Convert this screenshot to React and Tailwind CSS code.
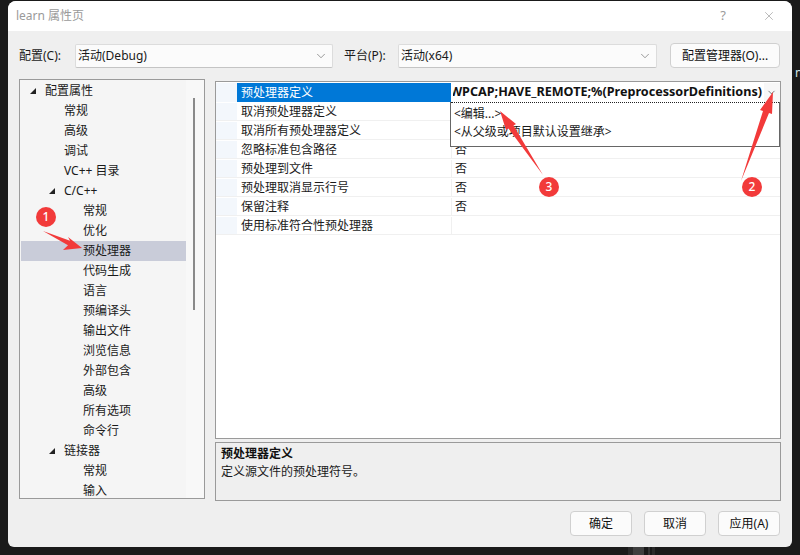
import { X, ChevronDown } from 'lucide-react';

const font = { fontFamily: '"Noto Sans", "Noto Sans CJK SC", sans-serif' };

const treeItems = [
    { label: '配置属性', level: 0, open: true },
    { label: '常规', level: 1 },
    { label: '高级', level: 1 },
    { label: '调试', level: 1 },
    { label: 'VC++ 目录', level: 1 },
    { label: 'C/C++', level: 1, open: true },
    { label: '常规', level: 2 },
    { label: '优化', level: 2 },
    { label: '预处理器', level: 2, selected: true },
    { label: '代码生成', level: 2 },
    { label: '语言', level: 2 },
    { label: '预编译头', level: 2 },
    { label: '输出文件', level: 2 },
    { label: '浏览信息', level: 2 },
    { label: '外部包含', level: 2 },
    { label: '高级', level: 2 },
    { label: '所有选项', level: 2 },
    { label: '命令行', level: 2 },
    { label: '链接器', level: 1, open: true },
    { label: '常规', level: 2 },
    { label: '输入', level: 2 },
];

const levelPadding = ['pl-[24px]', 'pl-[43px]', 'pl-[62px]'];
const caretPosition = ['left-[9px]', 'left-[28px]', 'left-[47px]'];

const gridRows = [
    { name: '取消预处理器定义', value: '' },
    { name: '取消所有预处理器定义', value: '' },
    { name: '忽略标准包含路径', value: '否' },
    { name: '预处理到文件', value: '否' },
    { name: '预处理取消显示行号', value: '否' },
    { name: '保留注释', value: '否' },
    { name: '使用标准符合性预处理器', value: '' },
];

const arrows = [
    '82,248 68,237 70,240.7 43,231 68,245.3 63,250',
    '773,92 772,114 769,113 741,181 763,111 760,110',
    '500,111 516,124 513.5,125.5 543,175 508.5,128.5 506,130',
];

const badges = [
    { n: 1, pos: 'left-[36px] top-[207px]' },
    { n: 2, pos: 'left-[742px] top-[177px]' },
    { n: 3, pos: 'left-[539px] top-[177px]' },
];

const Select = ({ value, width }) => (
    <div className={`${width} h-[24px] flex items-center justify-between pl-[2px] pr-[4px] bg-[#fbfbfb] border border-[#dcdcdc] border-b-[#c4c4c4] rounded-[2px]`}>
        <span>{value}</span>
        <ChevronDown size={14} strokeWidth={1} className="text-[#555]" />
    </div>
);

const Button = ({ children, width = 'w-[62px]' }) => (
    <button className={`${width} h-[25px] flex items-center justify-center bg-[#fbfbfb] border border-[#d0d0d0] rounded-[4px] text-[#111]`}>
        {children}
    </button>
);

const App = () => {
    return (
        <div style={font} className="relative w-[800px] h-[555px] overflow-hidden bg-[#1a1a1a] pt-px pl-[8px] text-[12px] text-[#1a1a1a]">
            <div className="w-[784px] h-[546px] flex flex-col bg-[#efefef] rounded-t-[8px] rounded-b-[6px] overflow-hidden">
                {/* title bar */}
                <div className="h-[30px] shrink-0 bg-white flex items-center justify-between pl-[8px] pr-[16px] text-[#9a9a9a]">
                    <span className="text-[12px]">learn 属性页</span>
                    <div className="flex items-center gap-[36px]">
                        <span className="text-[13px]">?</span>
                        <X size={14} strokeWidth={1} className="text-[#8a8a8a]" />
                    </div>
                </div>

                {/* config row */}
                <div className="flex items-center h-[25px] mt-[12px] pl-[11px]">
                    <span className="w-[56px]">配置(C):</span>
                    <Select value="活动(Debug)" width="w-[258px]" />
                    <span className="ml-[11px] w-[54px]">平台(P):</span>
                    <Select value="活动(x64)" width="w-[259px]" />
                    <Button width="w-[110px] ml-[13px]">配置管理器(O)...</Button>
                </div>

                {/* main panels */}
                <div className="flex gap-[10px] pl-[11px] mt-[11px]">
                    <div className="relative w-[186px] h-[420px] border border-[#9a9a9a] bg-[#f5f5f5] overflow-hidden flex justify-between">
                        <div className="w-[166px] pt-px pl-px">
                            {treeItems.map((item, i) => (
                                <div key={i} className={`relative h-[20px] flex items-center ${levelPadding[item.level]} ${item.selected ? 'bg-[#c9ccd9]' : ''}`}>
                                    {item.open && (
                                        <span className={`absolute top-[7px] w-0 h-0 border-l-[6px] border-l-transparent border-b-[6px] border-b-[#222] ${caretPosition[item.level]}`} />
                                    )}
                                    {item.label}
                                </div>
                            ))}
                        </div>
                        <div className="w-[18px] bg-[#f8f8f8] pt-[18px] pl-[7px]">
                            <div className="w-[2px] h-[212px] bg-[#8a8a8a]" />
                        </div>
                    </div>

                    <div className="flex flex-col gap-[3px] mt-[2px]">
                        <div className="w-[566px] h-[358px] border border-[#9a9a9a] bg-white pt-px">
                            <div className="flex h-[19px]">
                                <div className="w-[21px] bg-[#f3f7fc]" />
                                <div className="w-[214px] bg-[#0078d7] text-white pl-[4px] flex items-center">预处理器定义</div>
                                <div className="w-[313px] border-l-2 border-white pr-[2px] overflow-hidden flex justify-end items-center font-bold text-[12.6px] text-[#111] whitespace-nowrap">
                                    WPCAP;HAVE_REMOTE;%(PreprocessorDefinitions)
                                </div>
                                <div className="w-[16px] bg-[#f7f7f7] flex items-center pl-[2px]">
                                    <ChevronDown size={11} strokeWidth={1.5} className="text-[#444]" />
                                </div>
                            </div>
                            {gridRows.map((row) => (
                                <div key={row.name} className="flex h-[19px] pt-px border-b border-[#f0f0f0]">
                                    <div className="w-[21px] bg-[#f3f7fc]" />
                                    <div className="w-[214px] pl-[4px] flex items-center">{row.name}</div>
                                    <div className="flex-1 pl-[3px] flex items-center border-l border-[#f0f0f0]">{row.value}</div>
                                </div>
                            ))}
                        </div>
                        <div className="w-[566px] h-[59px] border border-[#9a9a9a] pl-[5px] pt-[2px] leading-[18px]">
                            <div className="font-bold text-[#111]">预处理器定义</div>
                            <div>定义源文件的预处理符号。</div>
                        </div>
                    </div>
                </div>

                {/* footer */}
                <div className="flex justify-end gap-[12px] pr-[12px] mt-[10px]">
                    <Button>确定</Button>
                    <Button>取消</Button>
                    <Button>应用(A)</Button>
                </div>
            </div>

            {/* open dropdown of the value cell */}
            <div className="absolute left-[450px] top-[102px] w-[330px] h-[45px] bg-white border border-t-0 border-[#666] leading-[18px]">
                <div className="border-t border-dotted border-[#222] pl-[3px] pt-[2px]">
                    <div>&lt;编辑...&gt;</div>
                    <div>&lt;从父级或项目默认设置继承&gt;</div>
                </div>
            </div>

            {/* screenshot annotations */}
            <svg className="absolute left-0 top-0" width="800" height="555">
                {arrows.map((points) => (
                    <polygon key={points} points={points} fill="#f23a3a" />
                ))}
            </svg>
            {badges.map((b) => (
                <div key={b.n} className={`absolute ${b.pos} w-[20px] h-[20px] rounded-full bg-[#f23a3a] text-white text-[12px] font-medium flex items-center justify-center`}>
                    {b.n}
                </div>
            ))}

            {/* bits of the desktop behind the dialog */}
            <span className="absolute left-[795px] top-[64px] text-[12px] text-[#cfe3e6]">n</span>
            <div className="absolute left-[628px] top-[547px] w-[5px] h-[8px] bg-[#2a2a2a]" />
            <div className="absolute left-[633px] top-[547px] w-[11px] h-[8px] bg-[#3f3f3f]" />
            <div className="absolute left-[648px] top-[547px] w-[2px] h-[8px] bg-[#333]" />
            <div className="absolute left-[652px] top-[547px] w-[3px] h-[8px] bg-[#2a2a2a]" />
        </div>
    );
};

export default App;
